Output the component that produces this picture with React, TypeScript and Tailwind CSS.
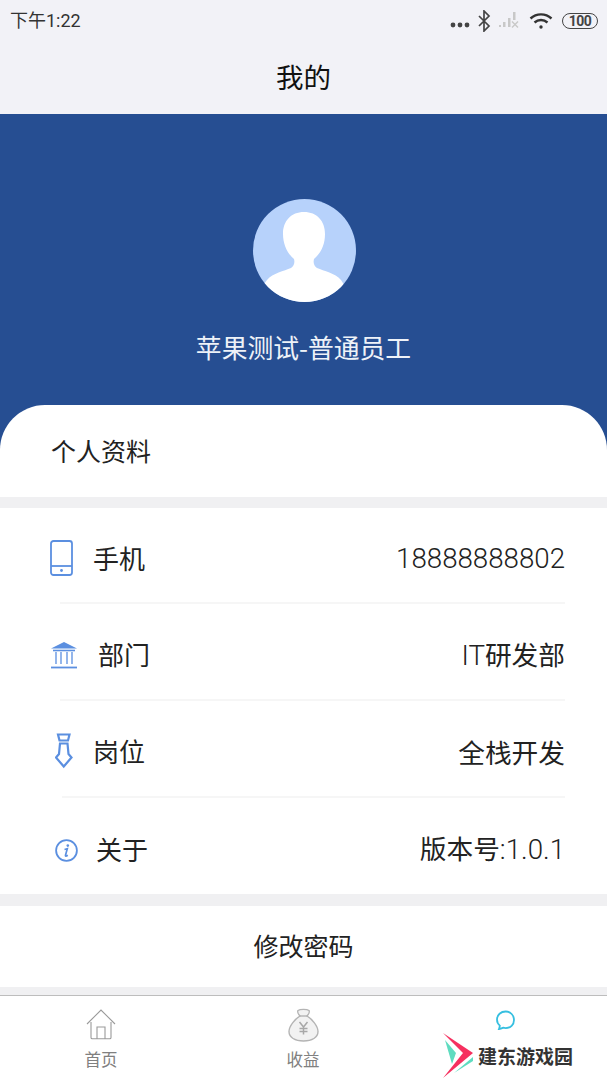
const font = "[font-family:'Noto_Sans_CJK_SC','Liberation_Sans',sans-serif]";

function Latin({ children }: { children: React.ReactNode }) {
  return <span className="font-['Roboto',sans-serif] font-light text-[27.7px]">{children}</span>;
}

function Row({ icon, label, value, iconBox, divider, height }: { icon: React.ReactNode; label: string; value: React.ReactNode; iconBox: string; divider?: string; height: string }) {
  return (
    <div className={`flex flex-col ${height}`}>
      <div className="flex-1 flex items-center pr-[42px] pt-[4px]">
        <div className={`flex items-center shrink-0 ${iconBox}`}>{icon}</div>
        <span className="text-[26px] leading-[36px] text-[#222] pt-[1px]">{label}</span>
        <span className="ml-auto text-[26.700px] leading-[36px] text-[#222] pt-[2px]">{value}</span>
      </div>
      {divider ? <div className={`h-[2px] bg-[#f6f6f6] mr-[42px] ${divider}`} /> : null}
    </div>
  );
}

export default function App() {
  return (
    <div className={`w-[607px] h-[1080px] overflow-hidden flex flex-col bg-[#f0f0f2] relative ${font}`}>
      <div className="h-[114px] shrink-0 bg-[#f2f2f7] flex flex-col">
        <div className="h-[40px] flex items-center pl-[10px] pr-[9px] pt-[2px]">
          <span className="text-[18px] leading-[24px] text-[#333] font-['Roboto','Noto_Sans_CJK_SC',sans-serif]">下午1:22</span>
          <div className="ml-auto flex items-center">
            <svg width="20" height="6" viewBox="0 0 20 6" className="mt-[7px]"><circle cx="3" cy="3" r="2.4" fill="#444"/><circle cx="10" cy="3" r="2.4" fill="#444"/><circle cx="17" cy="3" r="2.4" fill="#444"/></svg>
            <svg width="14" height="22" viewBox="0 0 14 22" className="ml-[7px]" fill="none" stroke="#444" strokeWidth="1.7"><path d="M2 6l10 10-5 5V1l5 5L2 16"/></svg>
            <svg width="22" height="18" viewBox="0 0 22 18" className="ml-[7px] -mt-[2px]" fill="#c8c8c8"><rect x="1" y="14" width="2" height="2"/><rect x="5" y="11" width="2.5" height="5"/><rect x="10" y="7" width="2.5" height="9"/><rect x="15" y="1" width="2.5" height="8"/><path d="M14 10.500l6 6M20 10.500l-6 6" stroke="#c8c8c8" strokeWidth="1.400"/></svg>
            <svg width="24" height="18" viewBox="0 0 24 18" className="ml-[9px]" fill="none" stroke="#333" strokeWidth="2.4"><path d="M1.500 6.500c6-5.500 15-5.500 21 0"/><path d="M5.500 10.500c3.800-3.300 9.200-3.300 13 0"/><circle cx="12" cy="15" r="1.700" fill="#333" stroke="none"/></svg>
            <div className="ml-[9px] w-[36px] h-[16px] rounded-full border-[1.5px] border-[#444] flex items-center justify-center text-[14px] leading-none font-bold text-[#444] font-['Roboto',sans-serif] tracking-[-0.5px]">100</div>
          </div>
        </div>
        <div className="flex-1 flex items-center justify-center pb-[3px] text-[27.500px] leading-[36px] text-[#111]">我的</div>
      </div>

      <div className="h-[336px] shrink-0 bg-[#264e92] flex flex-col items-center pt-[85px]">
        <div className="w-[103px] h-[103px] ml-[2px] rounded-full bg-[#b7d2fb] overflow-hidden">
          <svg width="103" height="103" viewBox="0 0 103 103" fill="#fff">
            <path d="M51 13c-13 0-21 9-21 22 0 11 5 20 11 25 1 4 0 7-3 9-7 3-18 5-24 12l-6 8 10 14h66l9-14-5-8c-6-7-17-9-24-12-3-2-4-5-3-9 7-6 11-14 11-25 0-13-8-22-21-22z"/>
          </svg>
        </div>
        <div className="mt-[25px] text-[25.800px] leading-[40px] text-[#eef2f8] whitespace-nowrap">苹果测试-普通员工</div>
      </div>

      <div className="-mt-[45px] h-[92px] shrink-0 bg-white rounded-t-[45px] flex items-center pl-[51px] pb-[3px] text-[25px] leading-[34px] text-[#222] relative">个人资料</div>

      <div className="mt-[11px] shrink-0 bg-white flex flex-col">
        <Row
          height="h-[96px]"
          label="手机"
          value={<Latin>18888888802</Latin>}
          iconBox="w-[93px] pl-[50px]"
          divider="ml-[60px]"
          icon={<svg width="23" height="36" viewBox="0 0 23 36" fill="none" stroke="#5b8fe0" strokeWidth="1.800" className="mt-[2px]"><rect x="1" y="1" width="21" height="34" rx="2.500"/><path d="M1 26h21"/><circle cx="11.500" cy="30.500" r="1.400" fill="#5b8fe0" stroke="none"/></svg>}
        />
        <Row
          height="h-[97px]"
          label="部门"
          value={<><Latin>IT</Latin>研发部</>}
          iconBox="w-[98px] pl-[50px]"
          divider="ml-[60px]"
          icon={<svg width="28" height="28" viewBox="0 0 28 28" fill="none" stroke="#5b8fe0" strokeWidth="1.300" className="mt-[2px]"><path d="M14 1L27 7.500H1z" fill="#5b8fe0" stroke="none"/><path d="M3 9.500h22" strokeWidth="1.600"/><path d="M6 11v12M11 11v12M17 11v12M22 11v12"/><path d="M1 26.500h26" strokeWidth="1.800"/></svg>}
        />
        <Row
          height="h-[97px]"
          label="岗位"
          value="全栈开发"
          iconBox="w-[93px] pl-[55px]"
          divider="ml-[62px]"
          icon={<svg width="18" height="36" viewBox="0 0 18 36" fill="none" stroke="#5b8fe0" strokeWidth="2.200"><path d="M3 1.500h11.500l-1.500 6H4.500z"/><path d="M5 10.500h7.500l1 10.500 3 3.500-7.750 9-7.750-9 3-3.500z"/></svg>}
        />
        <Row
          height="h-[96px]"
          label="关于"
          value={<>版本号<Latin>:1.0.1</Latin></>}
          iconBox="w-[96px] pl-[55px]"
          icon={<svg width="23" height="23" viewBox="0 0 23 23" fill="none" stroke="#5b8fe0" strokeWidth="1.800" className="mt-[5px]"><circle cx="11.500" cy="11.500" r="10.400"/><circle cx="12.800" cy="6.600" r="1.300" fill="#5b8fe0" stroke="none"/><path d="M9.500 10.500l2.800-.7-1.800 6.500c-.2 1 .5 1.200 2.300 0" strokeWidth="1.700"/></svg>}
        />
      </div>

      <div className="mt-[12px] h-[81px] shrink-0 bg-white flex items-center justify-center pb-[4px] text-[25px] leading-[34px] text-[#222]">修改密码</div>

      <div className="mt-[8px] flex-1 bg-white border-t border-[#bdbdbd] flex relative">
        <div className="w-[202px] flex flex-col items-center pt-[13px]">
          <svg width="30" height="31" viewBox="0 0 30 31" fill="none" stroke="#9a9a9a" strokeWidth="1.100"><path d="M1 15L15 1l14 14"/><path d="M5 13v15.500c0 .8.500 1.300 1.300 1.300h17.400c.8 0 1.300-.5 1.300-1.300V13"/><path d="M11 30V18h8v12"/></svg>
          <span className="mt-[8px] text-[16.500px] leading-[22px] text-[#808080]">首页</span>
        </div>
        <div className="w-[202px] flex flex-col items-center pt-[12px]">
          <svg width="31" height="34" viewBox="0 0 31 34" fill="none" stroke="#b4b4b4" strokeWidth="1.400"><path d="M10 2.500c2-1.500 9-1.500 11 0 1 1.500-1 4.500-2 5.500 5 3 11 10 11 15.500 0 6-6 9.500-14.500 9.500S1 29.500 1 23.500C1 18 7 11 12 8c-1-1-3-4-2-5.500z" fill="#f2f2f2"/><path d="M11 8h9" /><path d="M11.500 14l4 5 4-5M15.500 19v7.500M11.500 20.500h8M11.500 23.500h8" strokeWidth="1.500" stroke="#a8a8a8"/></svg>
          <span className="mt-[6px] text-[16.500px] leading-[22px] text-[#808080]">收益</span>
        </div>
        <div className="flex-1 flex flex-col items-center pt-[14px]">
          <svg width="21" height="21" viewBox="0 0 21 21" fill="none" stroke="#36bfe0" strokeWidth="1.800"><path d="M4 19c2-.2 3-.8 4-1.300 1 .3 1.800.4 2.700.4 4.800 0 8.300-3.200 8.300-8S15.500 1.500 10.700 1.500 2 4.800 2 9.600c0 2.600 1 4.600 2.800 6-.1 1.400-.4 2.400-.8 3.400z"/></svg>
        </div>
        <div className="absolute left-[443px] top-[37px] flex items-center">
          <svg width="32" height="45" viewBox="0 0 32 45"><path d="M0 0l30 20L0 45l20-25z" fill="#f6305f"/><path d="M2 7l11 13-4 11z" fill="#5fdcc0"/><path d="M30 24v4L11 40z" fill="#5fdcc0"/></svg>
          <span className="ml-[3px] text-[19px] leading-[24px] font-bold text-[#333] whitespace-nowrap">建东游戏园</span>
        </div>
      </div>
    </div>
  );
}
